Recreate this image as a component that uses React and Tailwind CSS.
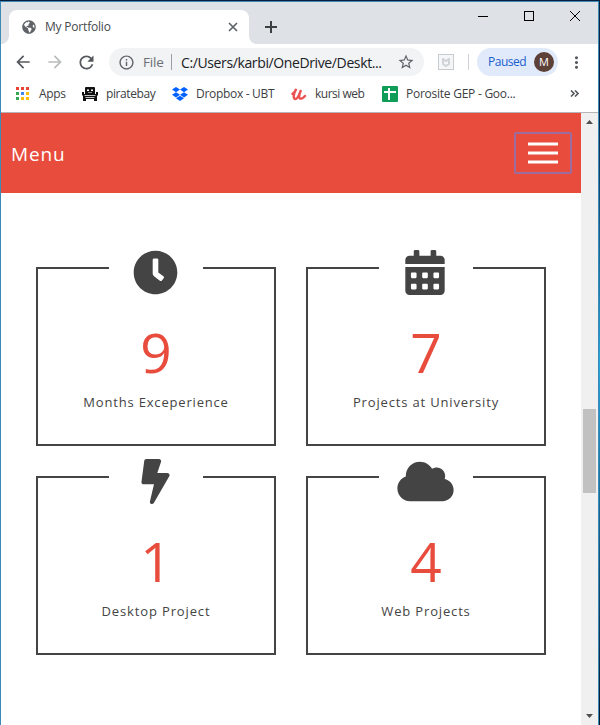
import { FaClock, FaCalendarAlt, FaBolt, FaCloud, FaGlobeAmericas } from "react-icons/fa";
import { MdArrowBack, MdArrowForward, MdRefresh, MdStarBorder, MdInfoOutline, MdMoreVert } from "react-icons/md";

const appColors = [
  "#ea4335", "#ea4335", "#ea4335",
  "#34a853", "#4285f4", "#fbbc05",
  "#34a853", "#fbbc05", "#fbbc05",
];

const stats = [
  { Icon: FaClock, size: "h-[45px] w-[45px]", value: "9", label: "Months Exceperience", spacing: "tracking-[0.82px]" },
  { Icon: FaCalendarAlt, size: "h-[45px] w-[40px]", value: "7", label: "Projects at University", spacing: "tracking-[0.84px]" },
  { Icon: FaBolt, size: "h-[45px] w-[29px]", value: "1", label: "Desktop Project", spacing: "tracking-[0.86px]" },
  { Icon: FaCloud, size: "h-[45px] w-[57px]", value: "4", label: "Web Projects", spacing: "tracking-[0.84px]" },
];

function TabStrip() {
  return (
    <div className="flex h-[42px] items-start bg-[#dee1e6]">
      <div className="flex h-[42px] w-2 items-end bg-[#dee1e6]">
        <svg width="8" height="8"><path d="M8 0v8H0a8 8 0 0 0 8-8z" fill="#fff" /></svg>
      </div>
      <div className="mt-2 flex h-[34px] w-[240px] items-center rounded-t-lg bg-white pl-[13px] pr-[11px]">
        <FaGlobeAmericas className="h-[14px] w-[14px] text-[#5f6368]" />
        <span className="ml-[9px] w-[66px] whitespace-nowrap text-[12px] tracking-[-0.2px] text-[#45494d]">My Portfolio</span>
        <svg className="ml-auto" width="10" height="10"><path d="M1 1l8 8m0-8l-8 8" stroke="#5f6368" strokeWidth="1.7" /></svg>
      </div>
      <div className="flex h-[42px] w-2 items-end">
        <svg width="8" height="8"><path d="M0 0v8h8a8 8 0 0 1-8-8z" fill="#fff" /></svg>
      </div>
      <svg className="ml-[8px] mt-[19px]" width="12" height="12"><path d="M6 0v12M0 6h12" stroke="#3c4043" strokeWidth="2" /></svg>
      <svg className="ml-auto mr-[16px] mt-[8px]" width="104" height="12" fill="none" stroke="#000">
        <path d="M0 6.5h10M92 1l10 10m0-10l-10 10" />
        <rect x="46.5" y="1.5" width="9" height="9" />
      </svg>
    </div>
  );
}

function Toolbar() {
  return (
    <div className="flex h-9 items-center bg-white pl-[12px]">
      <MdArrowBack className="h-5 w-5 text-[#55595d]" />
      <MdArrowForward className="ml-3 h-5 w-5 text-[#babcbe]" />
      <MdRefresh className="ml-[11px] h-[21px] w-[21px] text-[#55595d]" />
      <div className="ml-[12px] flex h-7 w-[315px] items-center rounded-full bg-[#f1f3f4] pl-[9px]">
        <MdInfoOutline className="h-[17px] w-[17px] text-[#5f6368]" />
        <span className="ml-[8px] w-[21px] text-[13.5px] tracking-[-0.2px] text-[#6b6f73]">File</span>
        <span className="ml-[7px] h-4 w-px bg-[#9aa0a6]" />
        <span className="ml-[9px] w-[203px] whitespace-nowrap text-[14px] tracking-[-0.38px] text-[#202124]">C:/Users/karbi/OneDrive/Deskt...</span>
        <MdStarBorder className="ml-[13px] h-[18px] w-[18px] text-[#5f6368]" />
      </div>
      <div className="ml-[14px] flex h-4 w-4 items-center justify-center border border-[#c9cccf] bg-[#f5f6f7]">
        <svg width="8" height="9" fill="none" stroke="#d0d3d6" strokeWidth="2"><path d="M1 1l3 2 3-2v5L4 8 1 6z" /></svg>
      </div>
      <span className="ml-[14px] h-4 w-px bg-[#cfd2d6]" />
      <div className="ml-[8px] flex h-7 w-[81px] items-center rounded-full bg-[#e1eafa] pl-[11px]">
        <span className="w-[38px] whitespace-nowrap text-[12px] tracking-[-0.5px] text-[#1a5fd0]">Paused</span>
        <span className="ml-[8px] flex h-5 w-5 items-center justify-center rounded-full bg-[#5d4037] text-[11px] font-medium text-white">M</span>
      </div>
      <MdMoreVert className="ml-[9px] h-[19px] w-[19px] text-[#55595d]" />
    </div>
  );
}

function Bookmarks() {
  const label = "whitespace-nowrap text-[12px] text-[#3c4043]";
  return (
    <div className="flex h-[32px] items-center bg-white pb-[5px] pl-[15px]">
      <div className="grid grid-cols-3 gap-[2px]">
        {appColors.map((color, i) => (
          <span key={i} className="h-[3px] w-[3px]" style={{ backgroundColor: color }} />
        ))}
      </div>
      <span className={label + " ml-[10px] w-[43px] tracking-[-0.3px]"}>Apps</span>
      <svg width="16" height="14" viewBox="0 0 16 14">
        <path d="M3 1q0-1 1-1h8q1 0 1 1v6h1V5h2v3l-1 1v5h-3v-2H4v2H1V9L0 8V5h2v2h1z" fill="#111" />
        <path d="M5 2.500h2v1.500H5zM9 2.500h2v1.500H9zM6 5.500h4v.6H6zM2.500 8.200h11v.8h-11zM3.500 10.300h9v.6h-9z" fill="#fff" />
      </svg>
      <span className={label + " ml-[8px] w-[66px] tracking-[-0.4px]"}>piratebay</span>
      <svg width="16" height="14" viewBox="0 0 16 14" fill="#0061ff">
        <path d="M4 0l4 2.6-4 2.6-4-2.6zM12 0l4 2.6-4 2.6-4-2.6zM4 5.2l4 2.6-4 2.6-4-2.6zM12 5.2l4 2.6-4 2.6-4-2.6zM8 8.7l4 2.6L8 14l-4-2.7z" />
      </svg>
      <span className={label + " ml-[8px] w-[95px] tracking-[-0.3px]"}>Dropbox - UBT</span>
      <svg width="16" height="14" viewBox="0 0 16 14" fill="none" stroke="#ec5252" strokeWidth="2.4" strokeLinecap="round">
        <path d="M1.5 7Q5 4 5 2Q2 8 3 11Q5 14 8 8L10 3Q7 10 9 11.500Q11 12.500 14 9" />
      </svg>
      <span className={label + " ml-[8px] w-[67px] tracking-[-0.5px]"}>kursi web</span>
      <svg width="16" height="16" viewBox="0 0 16 16">
        <rect width="16" height="16" rx="1" fill="#0f9d58" />
        <path d="M7 2v12M2 6h12" stroke="#fff" strokeWidth="2" />
      </svg>
      <span className={label + " ml-[8px] w-[112px] tracking-[-0.25px]"}>Porosite GEP - Goo...</span>
      <svg className="ml-[52px]" width="9" height="7" fill="none" stroke="#55595d" strokeWidth="1.6">
        <path d="M1 .5l3 3-3 3M5 .5l3 3-3 3" />
      </svg>
    </div>
  );
}

function StatCard({ Icon, size, value, label, spacing }) {
  return (
    <div className="flex h-[179px] w-[240px] flex-col items-center border-2 border-[#444] text-[#444]">
      <div className="-mt-[21px] flex h-[48px] w-[94px] items-center justify-center bg-white pr-[2px]">
        <Icon className={size} preserveAspectRatio="xMidYMid meet" />
      </div>
      <div className="mt-[18px] text-[55px] leading-[76px] text-[#e84c3d]">{value}</div>
      <div className={"mt-[2px] whitespace-nowrap text-[13px] font-medium leading-5 " + spacing}>{label}</div>
    </div>
  );
}

function Scrollbar() {
  return (
    <div className="flex w-[17px] flex-col items-center bg-[#f0f0f0]">
      <svg className="mt-[7px]" width="7" height="4"><path d="M0 4L3.500 0 7 4z" fill="#505050" /></svg>
      <div className="mt-[285px] h-[84px] w-[13px] bg-[#c1c1c1]" />
      <svg className="mb-[7px] mt-auto" width="7" height="4"><path d="M0 0l3.500 4L7 0z" fill="#505050" /></svg>
    </div>
  );
}

export default function App() {
  return (
    <div className="flex h-[725px] w-[600px] flex-col overflow-hidden bg-[#0b1f3d] pt-px font-['Open_Sans','Noto_Sans',sans-serif]">
      <div className="flex min-h-0 flex-1">
        <div className="flex w-[599px] flex-col border-l border-r border-t border-[#3c8ab5] bg-white">
          <div className="h-[110px] shrink-0">
            <TabStrip />
            <Toolbar />
            <Bookmarks />
          </div>
          <div className="h-px shrink-0 bg-[#b5b5b8]" />
          <div className="flex min-h-0 flex-1">
            <main className="w-[580px]">
              <header className="flex h-20 items-center justify-between bg-[#e84c3d] pl-[10px] pr-[9px]">
                <span className="pt-[3px] text-[19px] font-medium tracking-[0.9px] text-white">Menu</span>
                <div className="flex h-[42px] w-[58px] flex-col items-center justify-center gap-[5px] rounded-[2px] border-2 border-[#9b6c9d]">
                  <span className="h-[4px] w-[30px] border-y border-[#f2a59d] bg-white" />
                  <span className="h-[4px] w-[30px] border-y border-[#f2a59d] bg-white" />
                  <span className="h-[4px] w-[30px] border-y border-[#f2a59d] bg-white" />
                </div>
              </header>
              <section className="grid grid-cols-[240px_240px] gap-[30px] pl-[35px] pt-[74px]">
                {stats.map((stat) => <StatCard key={stat.label} {...stat} />)}
              </section>
            </main>
            <Scrollbar />
          </div>
        </div>
        <div className="w-px bg-linear-to-b from-[#0b2545] from-15% via-[#22a6e0] via-50% to-[#06182f]" />
      </div>
    </div>
  );
}
